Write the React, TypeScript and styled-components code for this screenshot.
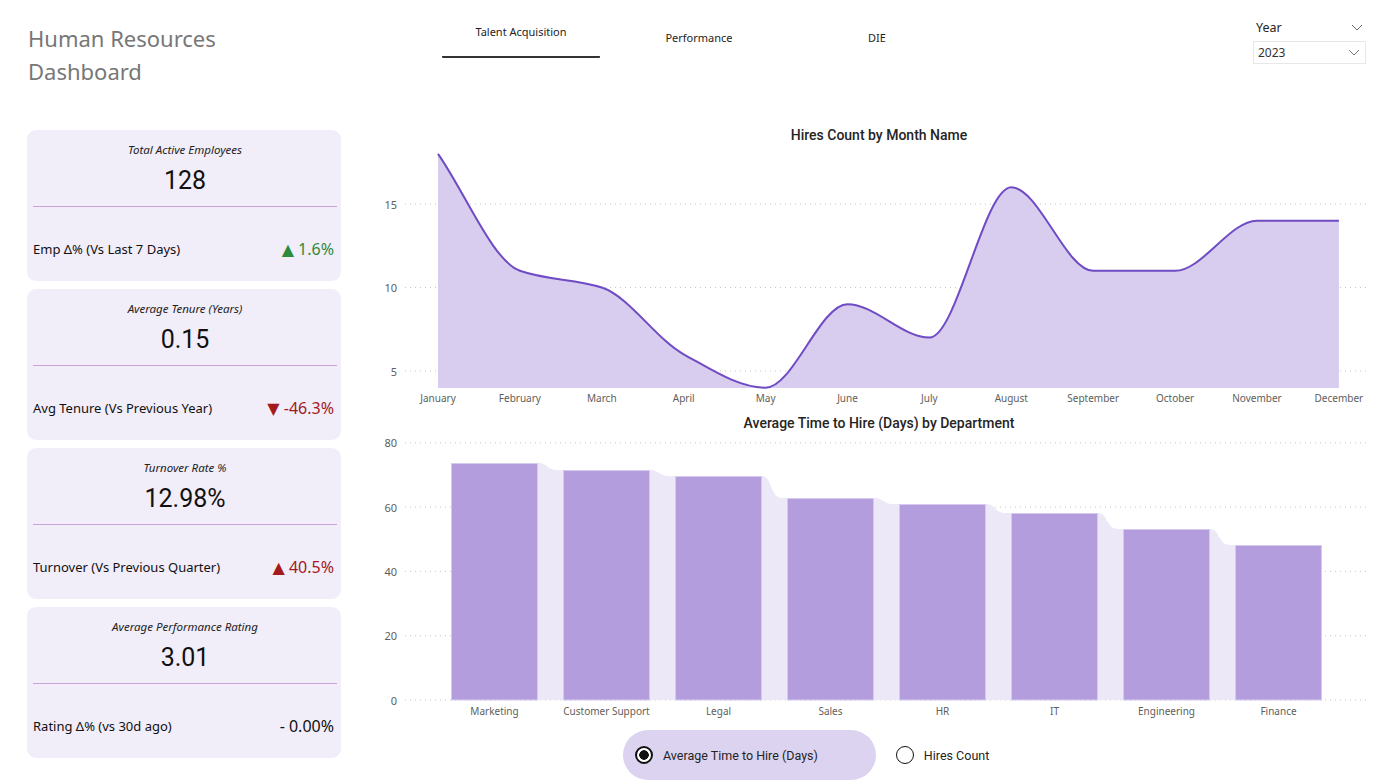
import React from 'react';
import styled, { createGlobalStyle } from 'styled-components';

const GlobalStyle = createGlobalStyle`
  html, body { margin: 0; padding: 0; background: #ffffff; }
  body { font-family: "Noto Sans", "DejaVu Sans", sans-serif; color: #252423; }
`;

const Page = styled.div`
  width: 1398px;
  height: 783px;
  overflow: hidden;
  display: grid;
  grid-template-columns: 360px 1fr;
  grid-template-rows: 120px 1fr;
`;

const Header = styled.header`
  grid-column: 1 / -1;
  display: flex;
  align-items: flex-start;
`;

const TitleBlock = styled.h1`
  margin: 0;
  width: 414px;
  padding: 22px 0 0 28px;
  font-family: "Comic Sans MS", "Noto Sans", sans-serif;
  font-weight: 400;
  font-size: 22px;
  line-height: 33px;
  color: #777777;
`;

const Tabs = styled.nav`
  display: flex;
  gap: 20px;
`;

const Tab = styled.div<{ $active?: boolean }>`
  width: 158px;
  height: 58px;
  box-sizing: border-box;
  padding-top: ${(p) => (p.$active ? '24px' : '30px')};
  text-align: center;
  font-size: 11px;
  line-height: 16px;
  color: #252423;
  border-bottom: 2px solid ${(p) => (p.$active ? '#333333' : 'transparent')};
  border-radius: 1px;
`;

const YearSlicer = styled.div`
  margin-left: auto;
  margin-right: 32px;
  width: 113px;
  padding-top: 19px;
`;

const SlicerHead = styled.div`
  display: flex;
  justify-content: space-between;
  align-items: center;
  height: 16px;
  padding: 0 3px;
  font-size: 12.5px;
  color: #252423;
`;

const SlicerBox = styled.div`
  margin-top: 6px;
  height: 23px;
  box-sizing: border-box;
  border: 1px solid #e8e8e8;
  display: flex;
  justify-content: space-between;
  align-items: center;
  padding: 0 5px 0 4px;
  font-size: 12px;
  color: #333333;
`;

const LeftColumn = styled.aside`
  padding: 10px 0 0 27px;
  display: flex;
  flex-direction: column;
  gap: 8px;
`;

const Card = styled.section`
  width: 314px;
  height: 151px;
  box-sizing: border-box;
  background: #f1edf9;
  border-radius: 9px;
  padding: 0 4px 0 6px;
  display: flex;
  flex-direction: column;
`;

const CardTitle = styled.div`
  margin-top: 12px;
  line-height: 16px;
  font-size: 11.5px;
  font-style: italic;
  text-align: center;
  color: #252423;
`;

const CardValue = styled.div`
  margin-top: 8px;
  line-height: 30px;
  font-family: "Roboto", "Noto Sans", sans-serif;
  font-size: 25px;
  font-weight: 400;
  text-align: center;
  color: #111111;
`;

const Divider = styled.div`
  margin-top: 10px;
  height: 1px;
  background: #c9a3d9;
`;

const CardFooter = styled.div`
  flex: 1;
  padding: 10px 3px 0 0;
  display: flex;
  justify-content: space-between;
  align-items: center;
`;

const FooterLabel = styled.span`
  font-size: 13px;
  color: #111111;
`;

const FooterValue = styled.span<{ $tone: 'up' | 'down' | 'neutral' }>`
  font-size: 16px;
  color: ${(p) => (p.$tone === 'up' ? '#2f8a3c' : p.$tone === 'down' ? '#a3191c' : '#111111')};
`;

const RightColumn = styled.main`
  display: flex;
  flex-direction: column;
`;

const ChartTitle = styled.h2<{ $h: number }>`
  margin: 0;
  height: ${(p) => p.$h}px;
  line-height: ${(p) => p.$h}px;
  text-align: center;
  font-family: "Roboto", "Noto Sans", sans-serif;
  font-weight: 500;
  font-size: 14px;
  color: #252423;
`;

const ChartSvg = styled.svg`
  display: block;
`;

const LegendRow = styled.div`
  display: flex;
  align-items: center;
  padding: 8px 0 0 263px;
  gap: 20px;
`;

const LegendItem = styled.div<{ $selected?: boolean }>`
  display: flex;
  align-items: center;
  gap: 10px;
  height: 50px;
  box-sizing: border-box;
  padding: 0 ${(p) => (p.$selected ? '58px' : '0')} 0 ${(p) => (p.$selected ? '12px' : '0')};
  border-radius: 25px;
  background: ${(p) => (p.$selected ? '#dcd3f1' : 'transparent')};
  font-family: "Roboto", "Noto Sans", sans-serif;
  font-size: 12.5px;
  color: #252423;
`;

const Radio = styled.span<{ $on?: boolean }>`
  width: 18px;
  height: 18px;
  box-sizing: border-box;
  border-radius: 50%;
  border: ${(p) => (p.$on ? '2px' : '1.5px')} solid #111111;
  background: ${(p) => (p.$on ? 'radial-gradient(circle, #111 0 4.5px, #fff 5px)' : '#ffffff')};
`;

const Chevron = ({ color = '#555' }: { color?: string }) => (
  <svg width="12" height="7" viewBox="0 0 12 7">
    <polyline points="1,1 6,6 11,1" fill="none" stroke={color} strokeWidth="1" />
  </svg>
);

type Pt = [number, number];

function monotonePath(pts: Pt[]): string {
  const n = pts.length;
  const s: number[] = [];
  for (let i = 0; i < n - 1; i++) {
    s.push((pts[i + 1][1] - pts[i][1]) / (pts[i + 1][0] - pts[i][0]));
  }
  const m: number[] = new Array(n).fill(0);
  for (let i = 1; i < n - 1; i++) {
    const s0 = s[i - 1];
    const s1 = s[i];
    if (s0 * s1 <= 0) {
      m[i] = 0;
    } else {
      m[i] = (2 * s0 * s1) / (s0 + s1);
    }
  }
  m[0] = s[0];
  m[n - 1] = s[n - 2] * 0.5;
  let d = `M${pts[0][0]},${pts[0][1]}`;
  for (let i = 0; i < n - 1; i++) {
    const [x0, y0] = pts[i];
    const [x1, y1] = pts[i + 1];
    const dx = (x1 - x0) / 3;
    d += ` C${x0 + dx},${y0 + m[i] * dx} ${x1 - dx},${y1 - m[i + 1] * dx} ${x1},${y1}`;
  }
  return d;
}

const months = ['January', 'February', 'March', 'April', 'May', 'June', 'July', 'August', 'September', 'October', 'November', 'December'];
const hires = [18, 11, 10, 6, 4, 9, 7, 16, 11, 11, 14, 14];

const AreaChart = () => {
  const ox = 360;
  const oy = 150;
  const yOf = (v: number) => 371 - (v - 5) * 16.7;
  const xOf = (i: number) => 438 + i * 81.9;
  const pts: Pt[] = hires.map((v, i) => [xOf(i), yOf(v)]);
  const line = monotonePath(pts);
  const base = 388;
  const area = `${line} L${xOf(11)},${base} L${xOf(0)},${base} Z`;
  return (
    <ChartSvg width={1038} height={260} viewBox={`${ox} ${oy} 1038 260`}>
      {[5, 10, 15].map((v) => (
        <g key={v}>
          <line x1={405} x2={1370} y1={yOf(v)} y2={yOf(v)} stroke="#c8c6c4" strokeWidth={1} strokeDasharray="1 4" />
          <text x={397} y={yOf(v)} textAnchor="end" dominantBaseline="central" fontSize={11} fill="#605e5c" fontFamily="Noto Sans, sans-serif">{v}</text>
        </g>
      ))}
      <path d={area} fill="#d8cdef" />
      <path d={line} fill="none" stroke="#6f4bc4" strokeWidth={2} strokeLinejoin="round" />
      {months.map((mo, i) => (
        <text key={mo} x={xOf(i)} y={398} textAnchor="middle" dominantBaseline="central" fontSize={10} fill="#605e5c" fontFamily="Noto Sans, sans-serif">{mo}</text>
      ))}
    </ChartSvg>
  );
};

const depts = [
  { name: 'Marketing', top: 463 },
  { name: 'Customer Support', top: 470 },
  { name: 'Legal', top: 476 },
  { name: 'Sales', top: 498 },
  { name: 'HR', top: 504 },
  { name: 'IT', top: 513 },
  { name: 'Engineering', top: 529 },
  { name: 'Finance', top: 545 },
];

const BarChart = () => {
  const ox = 360;
  const oy = 436;
  const yOf = (v: number) => 700 - v * 3.215;
  const bw = 87;
  const xOf = (i: number) => 451 + i * 112;
  let ribbon = `M${xOf(0)},700 L${xOf(0)},${depts[0].top}`;
  depts.forEach((d, i) => {
    const r = xOf(i) + bw;
    ribbon += ` L${r},${d.top}`;
    if (i < depts.length - 1) {
      const nt = depts[i + 1].top;
      ribbon += ` C${r + 10},${d.top} ${r + 8},${nt} ${r + 20},${nt}`;
    }
  });
  ribbon += ` L${xOf(depts.length - 1) + bw},700 Z`;
  return (
    <ChartSvg width={1038} height={286} viewBox={`${ox} ${oy} 1038 286`}>
      {[0, 20, 40, 60, 80].map((v) => (
        <g key={v}>
          <line x1={405} x2={1370} y1={yOf(v)} y2={yOf(v)} stroke="#c8c6c4" strokeWidth={1} strokeDasharray="1 4" />
          <text x={397} y={yOf(v)} textAnchor="end" dominantBaseline="central" fontSize={11} fill="#605e5c" fontFamily="Noto Sans, sans-serif">{v}</text>
        </g>
      ))}
      <path d={ribbon} fill="#ede8f7" />
      {depts.map((d, i) => (
        <g key={d.name}>
          <rect x={xOf(i) + 0.5} y={d.top + 0.5} width={bw - 1} height={700 - d.top - 0.5} fill="#b39ddc" stroke="#d6cbef" strokeWidth={1} />
          <text x={xOf(i) + bw / 2} y={711} textAnchor="middle" dominantBaseline="central" fontSize={10} fill="#605e5c" fontFamily="Noto Sans, sans-serif">{d.name}</text>
        </g>
      ))}
    </ChartSvg>
  );
};

type Kpi = { title: string; value: string; label: string; delta: string; tone: 'up' | 'down' | 'neutral' };

const kpis: Kpi[] = [
  { title: 'Total Active Employees', value: '128', label: 'Emp Δ% (Vs Last 7 Days)', delta: '▲ 1.6%', tone: 'up' },
  { title: 'Average Tenure (Years)', value: '0.15', label: 'Avg Tenure (Vs Previous Year)', delta: '▼ -46.3%', tone: 'down' },
  { title: 'Turnover Rate %', value: '12.98%', label: 'Turnover (Vs Previous Quarter)', delta: '▲ 40.5%', tone: 'down' },
  { title: 'Average Performance Rating', value: '3.01', label: 'Rating Δ% (vs 30d ago)', delta: '- 0.00%', tone: 'neutral' },
];

export default function App() {
  return (
    <>
      <GlobalStyle />
      <Page>
        <Header>
          <TitleBlock>
            Human Resources
            <br />
            Dashboard
          </TitleBlock>
          <Tabs>
            <Tab $active>Talent Acquisition</Tab>
            <Tab>Performance</Tab>
            <Tab>DIE</Tab>
          </Tabs>
          <YearSlicer>
            <SlicerHead>
              <span>Year</span>
              <Chevron color="#666" />
            </SlicerHead>
            <SlicerBox>
              <span>2023</span>
              <Chevron color="#777" />
            </SlicerBox>
          </YearSlicer>
        </Header>
        <LeftColumn>
          {kpis.map((k) => (
            <Card key={k.title}>
              <CardTitle>{k.title}</CardTitle>
              <CardValue>{k.value}</CardValue>
              <Divider />
              <CardFooter>
                <FooterLabel>{k.label}</FooterLabel>
                <FooterValue $tone={k.tone}>{k.delta}</FooterValue>
              </CardFooter>
            </Card>
          ))}
        </LeftColumn>
        <RightColumn>
          <ChartTitle $h={30}>Hires Count by Month Name</ChartTitle>
          <AreaChart />
          <ChartTitle $h={26}>Average Time to Hire (Days) by Department</ChartTitle>
          <BarChart />
          <LegendRow>
            <LegendItem $selected>
              <Radio $on />
              Average Time to Hire (Days)
            </LegendItem>
            <LegendItem>
              <Radio />
              Hires Count
            </LegendItem>
          </LegendRow>
        </RightColumn>
      </Page>
    </>
  );
}
